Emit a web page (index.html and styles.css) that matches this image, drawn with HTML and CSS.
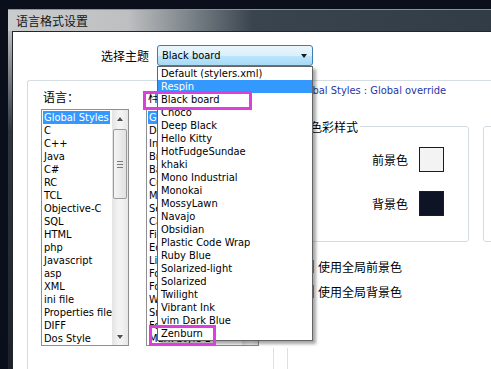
FILE: index.html
```html
<!DOCTYPE html>
<html>
<head>
    <title>语言格式设置</title>
    <link rel="stylesheet" href="styles.css">
</head>
<body>
    <div class="window">
        <div class="titlebar">语言格式设置</div>
        <div class="frame">
            <div class="client">
                <div class="theme-row">
                    <span class="theme-label">选择主题</span>
                    <div class="combo">
                        <span>Black board</span>
                        <span class="arrow"></span>
                    </div>
                </div>

                <div class="group">
                    <div class="lang-col">
                        <div class="cap">语言：</div>
                        <div class="listbox">
                            <ul>
                                <li class="sel">Global Styles</li>
                                <li>C</li>
                                <li>C++</li>
                                <li>Java</li>
                                <li>C#</li>
                                <li>RC</li>
                                <li>TCL</li>
                                <li>Objective-C</li>
                                <li>SQL</li>
                                <li>HTML</li>
                                <li>php</li>
                                <li>Javascript</li>
                                <li>asp</li>
                                <li>XML</li>
                                <li>ini file</li>
                                <li>Properties file</li>
                                <li>DIFF</li>
                                <li>Dos Style</li>
                            </ul>
                            <div class="vscroll">
                                <div class="sb-btn"><span class="up"></span></div>
                                <div class="thumb"><span class="grip"></span></div>
                                <div class="sb-btn bottom"><span class="down"></span></div>
                            </div>
                        </div>
                    </div>

                    <div class="style-col">
                        <div class="cap">样式：</div>
                        <div class="listbox">
                            <ul>
                                <li class="sel">Global override</li>
                                <li>Default Style</li>
                                <li>Indent guideline style</li>
                                <li>Brace highlight style</li>
                                <li>Bad brace colour</li>
                                <li>Current line background colour</li>
                                <li>Mark colour</li>
                                <li>Selected text colour</li>
                                <li>Caret colour</li>
                                <li>Find Mark Style</li>
                                <li>Edge colour</li>
                                <li>Line number margin</li>
                                <li>Fold</li>
                                <li>Fold margin</li>
                                <li>White space symbol</li>
                                <li>Smart HighLighting</li>
                                <li>Fold active</li>
                                <li>Mark Style 1</li>
                            </ul>
                            <div class="vscroll">
                                <div class="sb-btn"><span class="up"></span></div>
                                <div class="thumb short"><span class="grip"></span></div>
                                <div class="sb-btn bottom"><span class="down"></span></div>
                            </div>
                        </div>
                    </div>

                    <div class="detail-col">
                        <div class="desc">Global Styles : Global override</div>
                        <div class="boxes">
                            <div class="colour-group">
                                <div class="legend">色彩样式</div>
                                <div class="swatch-row first">
                                    <span>前景色</span>
                                    <span class="swatch fg"></span>
                                </div>
                                <div class="swatch-row">
                                    <span>背景色</span>
                                    <span class="swatch bg"></span>
                                </div>
                            </div>
                            <div class="font-group"></div>
                        </div>
                        <div class="check first"><span class="box"></span>使用全局前景色</div>
                        <div class="check"><span class="box"></span>使用全局背景色</div>
                        <div class="lower"><div class="lower-inner"></div></div>
                    </div>
                </div>
            </div>
        </div>
    </div>

    <!-- open theme list -->
    <ul class="dropdown">
        <li>Default (stylers.xml)</li>
        <li class="hot">Respin</li>
        <li>Black board</li>
        <li>Choco</li>
        <li>Deep Black</li>
        <li>Hello Kitty</li>
        <li>HotFudgeSundae</li>
        <li>khaki</li>
        <li>Mono Industrial</li>
        <li>Monokai</li>
        <li>MossyLawn</li>
        <li>Navajo</li>
        <li>Obsidian</li>
        <li>Plastic Code Wrap</li>
        <li>Ruby Blue</li>
        <li>Solarized-light</li>
        <li>Solarized</li>
        <li>Twilight</li>
        <li>Vibrant Ink</li>
        <li>vim Dark Blue</li>
        <li>Zenburn</li>
    </ul>

    <div class="mark mark-one"></div>
    <div class="mark mark-two"></div>
</body>
</html>
```

FILE: styles.css
```css
html,
body {
    margin: 0;
    height: 369px;
    overflow: hidden;
}
body {
    position: relative;
    box-sizing: border-box;
    padding: 9px 0 0 8px;
    background-color: #0b0f1b;
    font-family: "DejaVu Sans Condensed", "Liberation Sans", Arial, sans-serif;
    font-size: 11px;
    color: #000;
}
.titlebar,
.theme-label,
.cap,
.legend,
.swatch-row,
.check {
    font-family: "Noto Sans CJK SC", "Liberation Sans", sans-serif;
    font-size: 12px;
}
.window {
    width: 520px;
}
.titlebar {
    height: 21px;
    line-height: 21px;
    padding-left: 8px;
    color: #151515;
    border-top: 1px solid #8d9296;
    background: linear-gradient(to right, #c9cbcd 0, #bdbfc1 120px, #737b82 190px, #3a444e 245px, #313b45 100%);
}
.frame {
    display: flex;
    padding-left: 4px;
    background: linear-gradient(to bottom, #b9bbbd 0, #80858a 40px, #30363e 100px, #1d222a 100%);
}
.client {
    flex: 1;
    height: 338px;
    background-color: #fff;
    border-left: 1px solid #22272e;
    border-top: 1px solid #22272e;
}

/* theme selector */
.theme-row {
    display: flex;
    align-items: center;
    height: 21px;
    margin-top: 13px;
}
.theme-label {
    width: 48px;
    margin-left: 88px;
    margin-right: 8px;
    line-height: 13px;
    white-space: nowrap;
}
.combo {
    display: flex;
    align-items: center;
    width: 156px;
    height: 21px;
    box-sizing: border-box;
    padding-left: 4px;
    border: 1px solid #3c7fb1;
    border-radius: 3px;
    background: linear-gradient(to bottom, #eaf6fd 0, #d9f0fc 50%, #bee6fd 50%, #a7d9f5 100%);
}
.arrow {
    margin-left: auto;
    margin-right: 5px;
    border-top: 4px solid #1a1a1a;
    border-left: 3.5px solid transparent;
    border-right: 3.5px solid transparent;
}

/* main group */
.group {
    display: flex;
    height: 300px;
    margin: 14px 0 0 14px;
    border-top: 1px solid #d5dde3;
    border-left: 1px solid #d5dde3;
    border-top-left-radius: 3px;
}
.lang-col {
    width: 88px;
    margin-left: 13px;
}
.style-col {
    width: 113px;
    margin-left: 17px;
}
.cap {
    height: 28px;
    box-sizing: border-box;
    padding: 9px 0 0 2px;
    line-height: 13px;
    white-space: nowrap;
}
.listbox {
    display: flex;
    height: 237px;
    box-sizing: border-box;
    border: 1px solid #8e8f8f;
    background-color: #fff;
}
.listbox ul {
    flex: 1;
    min-width: 0;
    margin: 0;
    padding: 1px 0 0 1px;
    list-style: none;
    overflow: hidden;
}
.listbox li {
    height: 13px;
    line-height: 13px;
    padding-left: 1px;
    white-space: nowrap;
}
.listbox li.sel {
    width: fit-content;
    padding-right: 1px;
    background-color: #3399ff;
    color: #fff;
}
.vscroll {
    display: flex;
    flex-direction: column;
    width: 16px;
    background: linear-gradient(to right, #e3e3e3, #f3f3f3 40%, #f3f3f3 60%, #e6e6e6);
}
.sb-btn {
    display: flex;
    align-items: center;
    justify-content: center;
    height: 17px;
}
.sb-btn.bottom {
    margin-top: auto;
}
.up {
    border-bottom: 4px solid #505050;
    border-left: 3.5px solid transparent;
    border-right: 3.5px solid transparent;
}
.down {
    border-top: 4px solid #505050;
    border-left: 3.5px solid transparent;
    border-right: 3.5px solid transparent;
}
.thumb {
    display: flex;
    align-items: center;
    justify-content: center;
    height: 68px;
    margin: 2px 1px 0;
    border: 1px solid #9a9a9a;
    border-radius: 2px;
    background: linear-gradient(to right, #f4f4f4, #e2e2e2);
}
.thumb.short {
    height: 40px;
}
.grip {
    width: 6px;
    height: 5px;
    border-top: 1px solid #7a7a7a;
    border-bottom: 1px solid #7a7a7a;
    background: linear-gradient(#7a7a7a, #7a7a7a) center / 100% 1px no-repeat;
}

/* right side */
.detail-col {
    display: flex;
    flex-direction: column;
    flex: 1;
    margin-left: 14px;
}
.desc {
    margin: 3px 0 0 23px;
    line-height: 13px;
    color: #2536a8;
    white-space: nowrap;
}
.boxes {
    display: flex;
    margin: 29px 0 0 26px;
}
.colour-group {
    width: 170px;
    height: 116px;
    box-sizing: border-box;
    border: 1px solid #d5dde3;
    border-radius: 3px;
}
.legend {
    width: fit-content;
    margin: -7px 0 0 10px;
    padding-right: 2px;
    line-height: 13px;
    background-color: #fff;
}
.swatch-row {
    display: flex;
    align-items: center;
    justify-content: flex-end;
    gap: 11px;
    height: 25px;
    margin-top: 19px;
    padding-right: 24px;
    line-height: 13px;
}
.swatch-row.first {
    margin-top: 14px;
}
.swatch {
    width: 25px;
    height: 25px;
    box-sizing: border-box;
    border: 1px solid #1c1c1c;
}
.fg {
    background-color: #f3f3f3;
}
.bg {
    background-color: #0e1326;
}
.font-group {
    width: 40px;
    height: 116px;
    box-sizing: border-box;
    margin-left: 14px;
    border: 1px solid #d5dde3;
    border-radius: 3px;
}
.check {
    display: flex;
    align-items: center;
    gap: 4px;
    height: 13px;
    margin: 12px 0 0 28px;
    line-height: 13px;
    white-space: nowrap;
}
.check.first {
    margin-top: 18px;
}
.box {
    width: 13px;
    height: 13px;
    box-sizing: border-box;
    border: 1px solid #8f8f8f;
    background: linear-gradient(135deg, #dcdcdc, #fbfbfb);
}
.lower {
    flex: 1;
    margin-top: 50px;
    border-left: 1px solid #dbe0e5;
}
.lower-inner {
    height: 100%;
    margin-left: 13px;
    border-left: 1px solid #dbe0e5;
}

/* dropdown list of the combo, open over the dialog */
.dropdown {
    position: absolute;
    left: 157px;
    top: 66px;
    width: 156px;
    box-sizing: border-box;
    margin: 0;
    padding: 0;
    list-style: none;
    background-color: #fff;
    border: 1px solid #646464;
    box-shadow: 3px 3px 3px rgba(0, 0, 0, 0.35);
}
.dropdown li {
    height: 13px;
    line-height: 13px;
    padding-left: 3px;
    white-space: nowrap;
}
.dropdown li.hot {
    background-color: #3399ff;
    color: #fff;
}

/* magenta annotation boxes */
.mark {
    position: absolute;
    box-sizing: border-box;
    border: 3px solid #dc3fdc;
}
.mark-one {
    left: 143px;
    top: 91px;
    width: 109px;
    height: 19px;
}
.mark-two {
    left: 149px;
    top: 325px;
    width: 67px;
    height: 21px;
}
```
